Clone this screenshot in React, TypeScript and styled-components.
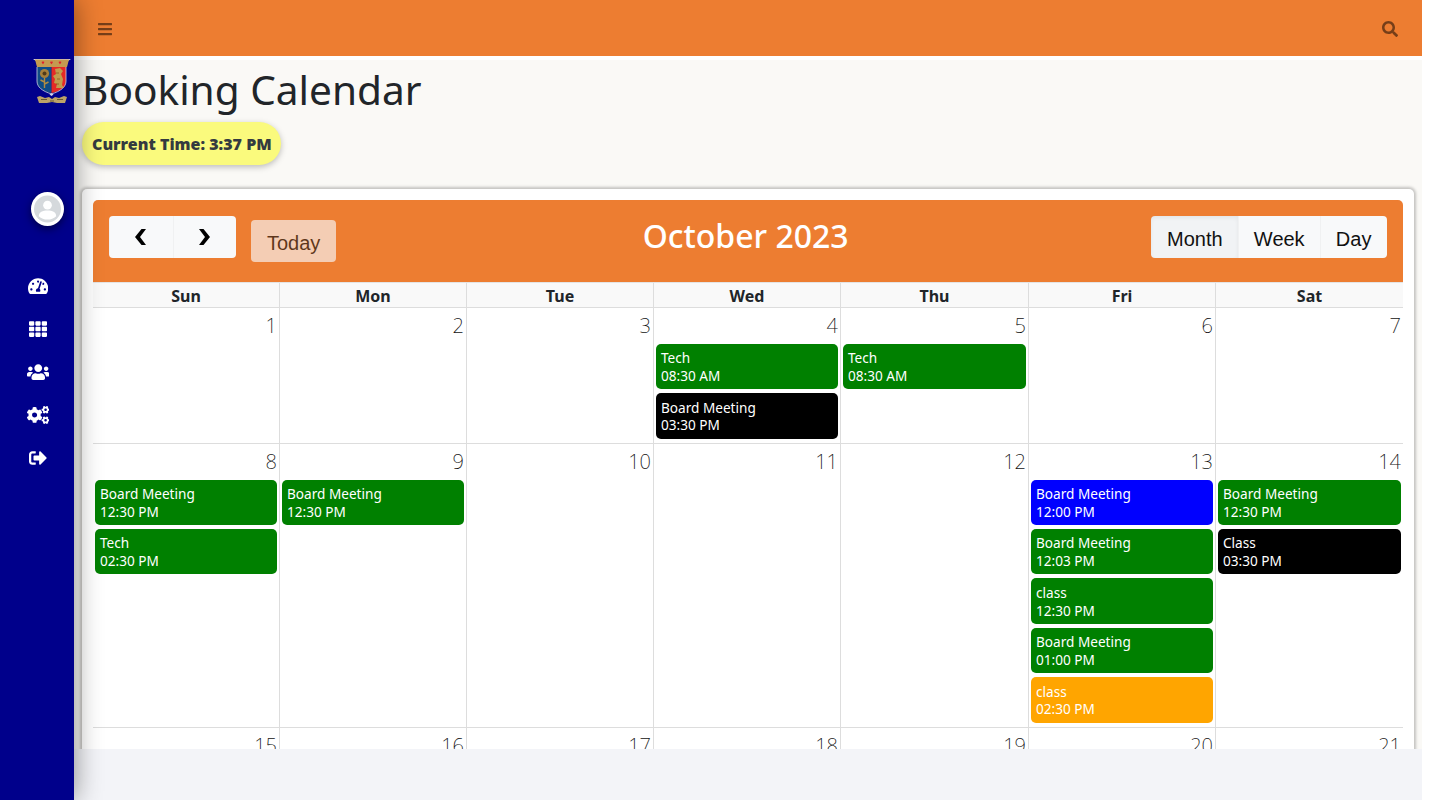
import styled, { createGlobalStyle } from "styled-components";
import {
  FaBars,
  FaCogs,
  FaSearch,
  FaSignOutAlt,
  FaTachometerAlt,
  FaTh,
  FaUsers,
} from "react-icons/fa";

const GlobalStyle = createGlobalStyle`
  html, body {
    margin: 0;
    height: 100%;
    overflow: hidden;
    background: #fff;
  }
  * {
    box-sizing: border-box;
  }
`;

const Shell = styled.div`
  display: flex;
  height: 800px;
  padding-right: 16px;
  font-family: "Noto Sans", sans-serif;
  color: #212529;
`;

const Sidebar = styled.aside`
  flex: 0 0 74px;
  position: relative;
  z-index: 2;
  display: flex;
  flex-direction: column;
  background: #00008b;
  box-shadow: 0 0 28px rgba(0, 0, 0, 0.45);
`;

const Crest = styled.svg`
  width: 38px;
  height: 47px;
  margin: 58px 0 0 33px;
`;

const Avatar = styled.div`
  width: 33px;
  height: 34px;
  margin: 87px 0 0 31px;
  border: 3px solid #fff;
  border-radius: 50%;
  background: #fff;
  box-shadow: 0 3px 8px rgba(0, 0, 0, 0.5);
  svg {
    display: block;
    width: 100%;
    height: 100%;
  }
`;

const SideNav = styled.nav`
  display: flex;
  flex-direction: column;
  margin-top: 38px;
`;

const SideLink = styled.a<{ $width: number }>`
  display: flex;
  align-items: center;
  justify-content: center;
  height: 43px;
  padding-left: 2px;
  color: #fff;
  svg {
    width: ${(p) => p.$width}px;
    height: 18px;
  }
`;

const Main = styled.main`
  flex: 0 0 1348px;
  display: flex;
  flex-direction: column;
  min-width: 0;
  background: #fff;
`;

const Topbar = styled.header`
  flex: 0 0 56px;
  display: flex;
  align-items: center;
  justify-content: space-between;
  padding: 2px 24px 0 23px;
  background: #ed7d31;
  color: rgba(0, 0, 0, 0.5);
  font-size: 16px;
`;

const Content = styled.div`
  flex: 1;
  min-height: 0;
  margin-top: 4px;
  padding: 6px 8px 0;
  overflow: hidden;
  background: #faf9f6;
`;

const Title = styled.h1`
  margin: 0 0 8px;
  font-size: 40.6px;
  font-weight: 400;
  line-height: 48px;
`;

const TimePill = styled.div`
  display: inline-block;
  height: 43px;
  padding: 1px 9.5px 0 10px;
  border-radius: 22px;
  background: #fafa7d;
  box-shadow: 0 2px 6px rgba(0, 0, 0, 0.25);
  color: #343a40;
  font-size: 16px;
  font-weight: 900;
  line-height: 43px;
`;

const Card = styled.section`
  margin-top: 24px;
  padding: 11px;
  border-radius: 5px;
  background: #fff;
  box-shadow: 0 0 3px 2px rgba(0, 0, 0, 0.22);
`;

const Toolbar = styled.div`
  display: flex;
  align-items: flex-start;
  justify-content: space-between;
  height: 82px;
  padding: 16px;
  border-radius: 5px 5px 0 0;
  background: #ed7d31;
`;

const ToolGroup = styled.div`
  display: flex;
  align-items: flex-start;
`;

const ButtonGroup = styled.div`
  display: flex;
  overflow: hidden;
  border-radius: 4px;
`;

const CalButton = styled.button<{ $active?: boolean }>`
  height: 42px;
  padding: 4px 15.6px 0;
  border: 0;
  background: ${(p) => (p.$active ? "#f1f3f5" : "#f8f9fa")};
  box-shadow: ${(p) =>
    p.$active
      ? "inset 0 2px 4px rgba(0, 0, 0, 0.06)"
      : "inset 1px 0 0 rgba(0, 0, 0, 0.03)"};
  color: #111;
  font-family: "Liberation Sans", Arial, sans-serif;
  font-size: 20px;
`;

const ArrowButton = styled(CalButton)`
  display: flex;
  align-items: center;
  justify-content: center;
  width: 63.5px;
  padding: 0;
  color: #000;
  svg {
    display: block;
    width: 11px;
    height: 16px;
  }
`;

const TodayButton = styled(CalButton)`
  margin: 4px 0 0 15px;
  padding: 4px 16px 0;
  border-radius: 4px;
  box-shadow: none;
  opacity: 0.65;
`;

const MonthTitle = styled.h2`
  margin: 0 0 0 3.5px;
  color: #fff;
  font-size: 32px;
  font-weight: 500;
  line-height: 40px;
`;

const Week = styled.div`
  display: grid;
  grid-template-columns: 187px 187px 187px 187px 188px 187px 187px;
  border-bottom: 1px solid #ddd;
`;

const HeadRow = styled(Week)`
  height: 26px;
  border-top: 1px solid #e4e4e4;
  background: #f9f9f9;
`;

const HeadCell = styled.div`
  border-right: 1px solid #ddd;
  font-size: 16px;
  font-weight: 700;
  line-height: 26px;
  text-align: center;
  &:last-child {
    border-right: 0;
  }
`;

const DayCell = styled.div`
  min-width: 0;
  border-right: 1px solid #ddd;
  &:last-child {
    border-right: 0;
  }
`;

const DayNumber = styled.div`
  height: 36px;
  padding-right: 2px;
  color: #111;
  font-size: 20px;
  font-weight: 200;
  line-height: 35px;
  text-align: right;
`;

const EventChip = styled.div<{ $color: string }>`
  height: 45.36px;
  margin: 0 2px 4px;
  padding: 5.4px 5px 0;
  border-radius: 5px;
  background: ${(p) => p.$color};
  color: #fff;
  font-size: 13.6px;
  line-height: 17.68px;
`;

const Footer = styled.footer`
  flex: 0 0 51px;
  background: #f3f4f8;
`;

const GREEN = "#008000";
const BLACK = "#000";
const BLUE = "#0000ff";
const ORANGE = "#ffa500";

type CalEvent = { title: string; time: string; color: string };

const green = (title: string, time: string): CalEvent => ({
  title,
  time,
  color: GREEN,
});

const weeks: { day: number; events?: CalEvent[] }[][] = [
  [
    { day: 1 },
    { day: 2 },
    { day: 3 },
    {
      day: 4,
      events: [
        green("Tech", "08:30 AM"),
        { title: "Board Meeting", time: "03:30 PM", color: BLACK },
      ],
    },
    { day: 5, events: [green("Tech", "08:30 AM")] },
    { day: 6 },
    { day: 7 },
  ],
  [
    {
      day: 8,
      events: [green("Board Meeting", "12:30 PM"), green("Tech", "02:30 PM")],
    },
    { day: 9, events: [green("Board Meeting", "12:30 PM")] },
    { day: 10 },
    { day: 11 },
    { day: 12 },
    {
      day: 13,
      events: [
        { title: "Board Meeting", time: "12:00 PM", color: BLUE },
        green("Board Meeting", "12:03 PM"),
        green("class", "12:30 PM"),
        green("Board Meeting", "01:00 PM"),
        { title: "class", time: "02:30 PM", color: ORANGE },
      ],
    },
    {
      day: 14,
      events: [
        green("Board Meeting", "12:30 PM"),
        { title: "Class", time: "03:30 PM", color: BLACK },
      ],
    },
  ],
  [
    { day: 15 },
    { day: 16 },
    { day: 17 },
    { day: 18 },
    { day: 19 },
    { day: 20 },
    { day: 21 },
  ],
];

const dayNames = ["Sun", "Mon", "Tue", "Wed", "Thu", "Fri", "Sat"];

const CrestLogo = () => (
  <Crest viewBox="0 0 38 47" aria-label="Crest">
    <path d="M0 1h38l-3 2H3z" fill="#d8d4e8" />
    <path d="M2 1.500h34l-2 7.500H4z" fill="#c49a50" />
    <path
      d="M10 3.800c1-1 2.400.2 0 2.400-2.400-2.200-1-3.400 0-2.400zM18.500 3.800c1-1 2.400.2 0 2.400-2.400-2.200-1-3.400 0-2.400zM27 3.800c1-1 2.400.2 0 2.400-2.400-2.200-1-3.400 0-2.400z"
      fill="#e0202c"
    />
    <path d="M4 9h14.500v26C9 33 4 29 4 23z" fill="#0f4c86" />
    <path d="M18.500 9H33v14c0 6-5 10-14.500 12z" fill="#e42a26" />
    <path
      d="M4 9v14c0 6 5 10 14.500 13C28 33 33 29 33 23V9"
      fill="none"
      stroke="#cfd0e0"
      strokeWidth="0.8"
    />
    <circle cx="11.500" cy="15.500" r="4.600" fill="#a57f3a" />
    <circle cx="11.500" cy="15.500" r="2" fill="#4f3a1a" />
    <path
      d="M11.500 20v10M11.500 24l-4-2M11.500 26l4-2"
      stroke="#b08c42"
      strokeWidth="1.400"
      fill="none"
    />
    <path
      d="M22 11l5-1 3 3-2 3 2 5-1 6 2 3h-8l1-4-3-1 1-4-2-3 3-2z"
      fill="#c29c4c"
    />
    <path d="M23 15h3M24 21h3M23 26h3" stroke="#8a5a20" strokeWidth="0.8" />
    <path d="M18.500 35l-2 1.500 2 1.500 2-1.500z" fill="#d8d4e8" />
    <path
      d="M4 39l3-1 5 2 4-1 3 2 3-2 4 1 5-2 3 1-2 6h-8l-5-1-5 1H6z"
      fill="#bca268"
    />
    <path d="M8 41.500h6M17 43h4M24 41.500h6" stroke="#6a5a30" strokeWidth="1" />
  </Crest>
);

const App = () => {
  return (
    <Shell>
      <GlobalStyle />
      <Sidebar>
        <CrestLogo />
        <Avatar>
          <svg viewBox="0 0 28 28">
            <circle cx="14" cy="14" r="14" fill="#d5d9dc" />
            <circle cx="14" cy="10" r="4.500" fill="#fff" />
            <path
              d="M5 21.500c0-4.500 4-6 9-6s9 1.500 9 6c-2.500 2.500-5.500 3.500-9 3.500s-6.500-1-9-3.500z"
              fill="#fff"
            />
          </svg>
        </Avatar>
        <SideNav>
          <SideLink $width={20.25}><FaTachometerAlt /></SideLink>
          <SideLink $width={18}><FaTh /></SideLink>
          <SideLink $width={22.5}><FaUsers /></SideLink>
          <SideLink $width={22.5}><FaCogs /></SideLink>
          <SideLink $width={18}><FaSignOutAlt /></SideLink>
        </SideNav>
      </Sidebar>
      <Main>
        <Topbar>
          <FaBars />
          <FaSearch />
        </Topbar>
        <Content>
          <Title>Booking Calendar</Title>
          <TimePill>Current Time: 3:37 PM</TimePill>
          <Card>
            <Toolbar>
              <ToolGroup>
                <ButtonGroup>
                  <ArrowButton aria-label="prev">
                    <svg viewBox="0 0 11 16">
                      <path d="M11 0H6.500L0 8l6.500 8H11L5 8z" fill="currentColor" />
                    </svg>
                  </ArrowButton>
                  <ArrowButton aria-label="next">
                    <svg viewBox="0 0 11 16">
                      <path d="M0 0h4.500L11 8l-6.500 8H0l6-8z" fill="currentColor" />
                    </svg>
                  </ArrowButton>
                </ButtonGroup>
                <TodayButton>Today</TodayButton>
              </ToolGroup>
              <MonthTitle>October 2023</MonthTitle>
              <ButtonGroup>
                <CalButton $active>Month</CalButton>
                <CalButton>Week</CalButton>
                <CalButton>Day</CalButton>
              </ButtonGroup>
            </Toolbar>
            <HeadRow>
              {dayNames.map((name) => (
                <HeadCell key={name}>{name}</HeadCell>
              ))}
            </HeadRow>
            {weeks.map((week) => (
              <Week key={week[0].day}>
                {week.map((cell) => (
                  <DayCell key={cell.day}>
                    <DayNumber>{cell.day}</DayNumber>
                    {cell.events?.map((ev) => (
                      <EventChip key={ev.time + ev.title} $color={ev.color}>
                        {ev.title}
                        <br />
                        {ev.time}
                      </EventChip>
                    ))}
                  </DayCell>
                ))}
              </Week>
            ))}
          </Card>
        </Content>
        <Footer />
      </Main>
    </Shell>
  );
};

export default App;
